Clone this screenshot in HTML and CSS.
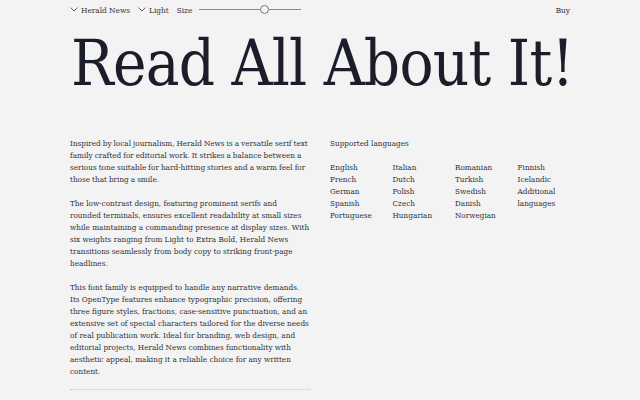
FILE: index.html
```html
<!DOCTYPE html>
<html>
<head>
<meta charset="utf-8">
<link rel="stylesheet" href="styles.css">
</head>
<body>
<div class="page">
  <header class="nav">
    <div class="nav-left">
      <span class="menu"><svg class="chev" width="8" height="5" viewBox="0 0 8 5"><path d="M0.5 0.5 L4 4 L7.5 0.5" fill="none" stroke="#555" stroke-width="0.9"/></svg>Herald News</span>
      <span class="menu"><svg class="chev" width="8" height="5" viewBox="0 0 8 5"><path d="M0.5 0.5 L4 4 L7.5 0.5" fill="none" stroke="#555" stroke-width="0.9"/></svg>Light</span>
      <span class="menu">Size</span>
      <div class="slider"><div class="track"></div><div class="thumb"></div></div>
    </div>
    <span class="buy">Buy</span>
  </header>
  <h1 class="title">Read All About It!</h1>
  <main class="cols">
    <section class="copy">
      <p class="lead">Inspired by local journalism, Herald News is a versatile serif text family crafted for editorial work. It strikes a balance between a serious tone suitable for hard-hitting stories and a warm feel for those that bring a smile.</p>
      <p>The low-contrast design, featuring prominent serifs and rounded terminals, ensures excellent readability at small sizes while maintaining a commanding presence at display sizes. With six weights ranging from Light to Extra Bold, Herald News transitions seamlessly from body copy to striking front-page headlines.</p>
      <p>This font family is equipped to handle any narrative demands. Its OpenType features enhance typographic precision, offering three figure styles, fractions, case-sensitive punctuation, and an extensive set of special characters tailored for the diverse needs of real publication work. Ideal for branding, web design, and editorial projects, Herald News combines functionality with aesthetic appeal, making it a reliable choice for any written content.</p>
      <div class="rule"></div>
    </section>
    <section class="langs">
      <p class="langs-title">Supported languages</p>
      <div class="lang-grid">
        <ul><li>English</li><li>French</li><li>German</li><li>Spanish</li><li>Portuguese</li></ul>
        <ul><li>Italian</li><li>Dutch</li><li>Polish</li><li>Czech</li><li>Hungarian</li></ul>
        <ul><li>Romanian</li><li>Turkish</li><li>Swedish</li><li>Danish</li><li>Norwegian</li></ul>
        <ul><li>Finnish</li><li>Icelandic</li><li>Additional languages</li></ul>
      </div>
    </section>
  </main>
</div>
</body>
</html>
```
FILE: styles.css
```css
* { box-sizing: border-box; }
html, body { margin: 0; padding: 0; }
body {
  background: #f3f3f3;
  color: #2f3138;
  font-family: "DejaVu Serif Condensed", "DejaVu Serif", serif;
  font-stretch: condensed;
  overflow: hidden;
  height: 400px;
}
.page {
  width: 500px;
  margin: 0 auto;
}
.nav {
  display: flex;
  justify-content: space-between;
  align-items: center;
  height: 19px;
  font-size: 8.2px;
  color: #2f3138;
}
.nav-left {
  display: flex;
  align-items: center;
  gap: 8px;
}
.menu {
  display: flex;
  align-items: center;
  gap: 3px;
}
.chev { display: block; }
.slider {
  position: relative;
  width: 102px;
  height: 9px;
  margin-left: -1px;
}
.track {
  position: absolute;
  left: 0; right: 0; top: 4px;
  height: 1px;
  background: #8a8a8a;
}
.thumb {
  position: absolute;
  left: 61px; top: 0;
  width: 9px; height: 9px;
  border-radius: 50%;
  border: 1px solid #777;
  background: #f6f6f6;
}
.title {
  margin: 5px 0 0 1px;
  font-weight: normal;
  font-size: 63px;
  line-height: 80px;
  letter-spacing: -0.75px;
  color: #1b1e2a;
  white-space: nowrap;
}
.cols {
  display: grid;
  grid-template-columns: 240px 240px;
  column-gap: 20px;
  margin-top: 33px;
  font-size: 8.1px;
  line-height: 12px;
}
.copy p { margin: 0 0 12px 0; }
.copy .lead { word-spacing: -0.3px; }
.rule {
  border-top: 1px dotted #c4c4c4;
  margin-top: 11px;
}
.langs-title { margin: 0 0 12px 0; }
.lang-grid {
  display: grid;
  grid-template-columns: repeat(4, 62.5px);
}
.lang-grid ul { list-style: none; margin: 0; padding: 0; }
```
